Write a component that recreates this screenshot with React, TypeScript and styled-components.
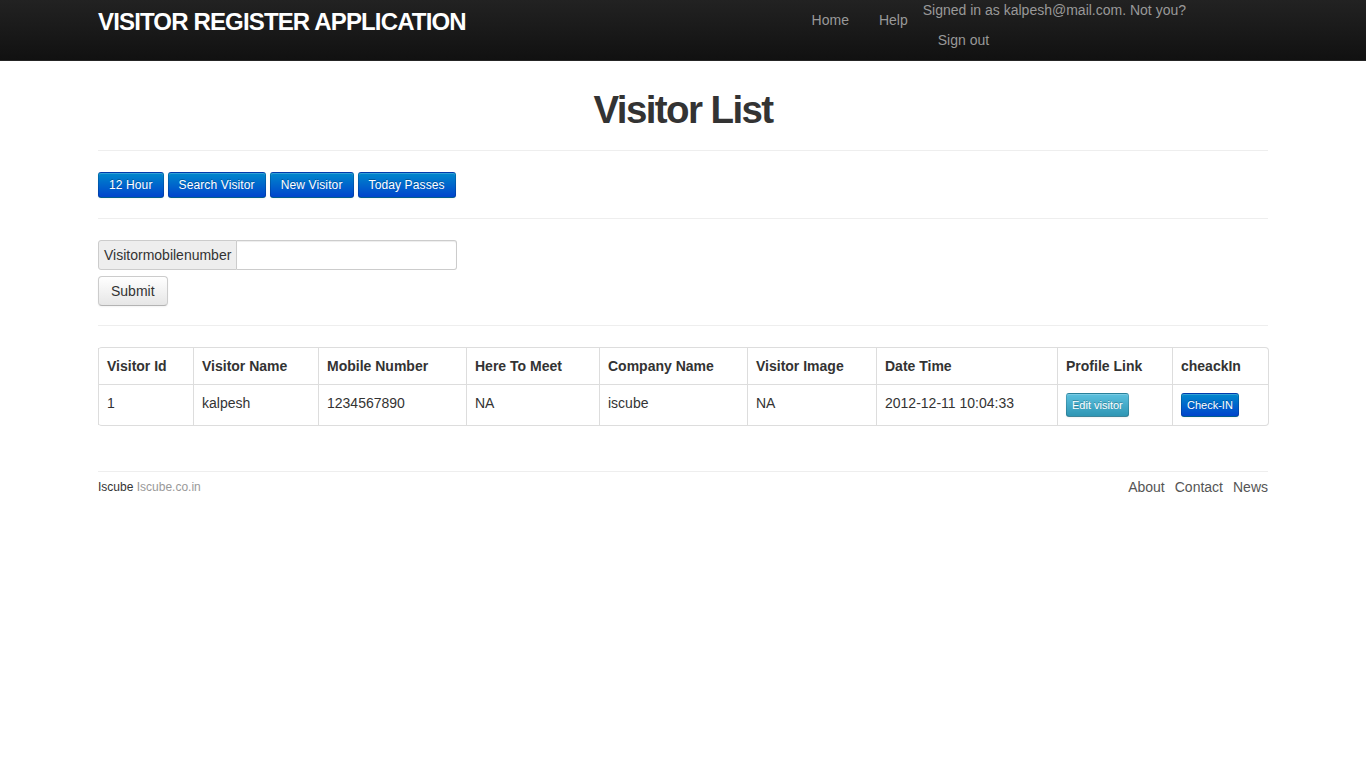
import React from "react";
import styled, { createGlobalStyle } from "styled-components";

const Global = createGlobalStyle`
  html, body { margin: 0; padding: 0; background: #fff; }
  body { font-family: "Liberation Sans", Arial, sans-serif; font-size: 14px; line-height: 20px; color: #333; }
  * { box-sizing: border-box; }
`;

const NavBar = styled.div`
  height: 61px;
  background: linear-gradient(to bottom, #222222, #111111);
  border-bottom: 1px solid #252525;
`;

const Container = styled.div`
  width: 1170px;
  margin: 0 auto;
`;

const NavInner = styled(Container)`
  display: flex;
  align-items: flex-start;
`;

const Brand = styled.a`
  display: block;
  color: #fff;
  font-weight: bold;
  font-size: 24px;
  line-height: 30px;
  padding-top: 7px;
  letter-spacing: -0.85px;
  text-decoration: none;
`;

const NavList = styled.ul`
  list-style: none;
  margin: 0 82px 0 auto;
  padding: 0;
  display: flex;
  align-items: flex-start;
`;

const NavLink = styled.a`
  display: block;
  padding: 10px 15px;
  color: #999;
  text-decoration: none;
  line-height: 20px;
  font-size: 14px;
`;

const SignedIn = styled.li`
  color: #999;
  display: flex;
  flex-direction: column;
  align-items: flex-start;
`;

const SignedText = styled.span`
  display: block;
  line-height: 20px;
`;

const Title = styled.h1`
  margin: 29px 0 0;
  text-align: center;
  font-size: 38.5px;
  line-height: 40px;
  font-weight: bold;
  letter-spacing: -1.6px;
  color: #333;
`;

const Rule = styled.hr<{ $top: number; $bottom: number }>`
  margin: ${p => p.$top}px 0 ${p => p.$bottom}px;
  border: 0;
  border-top: 1px solid #eee;
  border-bottom: 1px solid #fff;
`;

const ButtonRow = styled.div`
  display: flex;
  gap: 4px;
`;

const Btn = styled.a<{ $variant?: "primary" | "info"; $small?: boolean }>`
  display: inline-block;
  text-decoration: none;
  font-size: ${p => (p.$small ? 11 : 12)}px;
  line-height: 16px;
  padding: ${p => (p.$small ? "3px 5px 3px" : "4px 10px 4px")};
  letter-spacing: ${p => (p.$small ? 0 : 0.12)}px;
  border-radius: 3px;
  color: #fff;
  text-shadow: 0 -1px 0 rgba(0,0,0,0.25);
  cursor: pointer;
  border: 1px solid rgba(0,0,0,0.15);
  border-bottom-color: rgba(0,0,0,0.3);
  background: ${p =>
    p.$variant === "info"
      ? "linear-gradient(to bottom, #5bc0de, #2f96b4)"
      : "linear-gradient(to bottom, #0088cc, #0044cc)"};
  box-shadow: inset 0 1px 0 rgba(255,255,255,0.2), 0 1px 2px rgba(0,0,0,0.05);
`;

const Prepend = styled.div`
  display: flex;
  margin-bottom: 6px;
`;

const AddOn = styled.span`
  display: block;
  height: 30px;
  padding: 4px 5px;
  font-size: 14px;
  line-height: 20px;
  background: #eee;
  border: 1px solid #ccc;
  border-radius: 3px 0 0 3px;
  color: #333;
`;

const Input = styled.input`
  width: 220px;
  height: 30px;
  border: 1px solid #ccc;
  border-left: 0;
  border-radius: 0 3px 3px 0;
  margin: 0;
  padding: 4px 6px;
  font-family: inherit;
  font-size: 14px;
  box-shadow: inset 0 1px 1px rgba(0,0,0,0.075);
`;

const SubmitBtn = styled.button`
  display: block;
  height: 30px;
  padding: 4px 12px;
  font-family: inherit;
  font-size: 14px;
  line-height: 20px;
  color: #333;
  border: 1px solid #ccc;
  border-bottom-color: #b3b3b3;
  border-radius: 4px;
  background: linear-gradient(to bottom, #ffffff, #e6e6e6);
  box-shadow: inset 0 1px 0 rgba(255,255,255,0.2), 0 1px 2px rgba(0,0,0,0.05);
`;

const Table = styled.table`
  width: 1170px;
  border-collapse: separate;
  border-spacing: 0;
  border: 1px solid #ddd;
  border-left: 0;
  border-radius: 4px;
  table-layout: fixed;
`;

const Th = styled.th`
  text-align: left;
  font-weight: bold;
  padding: 8px;
  line-height: 20px;
  height: 36px;
  border-left: 1px solid #ddd;
  color: #333;
`;

const Td = styled.td`
  padding: 8px;
  line-height: 20px;
  border-left: 1px solid #ddd;
  border-top: 1px solid #ddd;
  vertical-align: top;
  height: 41px;
`;

const Footer = styled.footer`
  margin-top: 45px;
  border-top: 1px solid #eee;
  padding-top: 5px;
  display: flex;
  justify-content: space-between;
  align-items: center;
`;

const FootLeft = styled.div`
  font-size: 12px;
  color: #333;
`;

const FootMuted = styled.span`
  color: #999;
`;

const FootLinks = styled.div`
  display: flex;
  gap: 10px;
  font-size: 14px;
  color: #555;
`;

const cols = [95, 125, 148, 133, 148, 129, 181, 115, 96];
const heads = ["Visitor Id", "Visitor Name", "Mobile Number", "Here To Meet", "Company Name", "Visitor Image", "Date Time", "Profile Link", "cheackIn"];

export default function App() {
  return (
    <>
      <Global />
      <NavBar>
        <NavInner>
          <Brand>VISITOR REGISTER APPLICATION</Brand>
          <NavList>
            <li><NavLink>Home</NavLink></li>
            <li><NavLink>Help</NavLink></li>
            <SignedIn>
              <SignedText>Signed in as kalpesh@mail.com. Not you?</SignedText>
              <NavLink>Sign out</NavLink>
            </SignedIn>
          </NavList>
        </NavInner>
      </NavBar>
      <Container>
        <Title>Visitor List</Title>
        <Rule $top={20} $bottom={20} />
        <ButtonRow>
          <Btn $variant="primary">12 Hour</Btn>
          <Btn $variant="primary">Search Visitor</Btn>
          <Btn $variant="primary">New Visitor</Btn>
          <Btn $variant="primary">Today Passes</Btn>
        </ButtonRow>
        <Rule $top={20} $bottom={20} />
        <Prepend>
          <AddOn>Visitormobilenumber</AddOn>
          <Input />
        </Prepend>
        <SubmitBtn>Submit</SubmitBtn>
        <Rule $top={19} $bottom={20} />
        <Table>
          <colgroup>
            {cols.map((w, i) => <col key={i} style={{ width: w }} />)}
          </colgroup>
          <thead>
            <tr>{heads.map(h => <Th key={h}>{h}</Th>)}</tr>
          </thead>
          <tbody>
            <tr>
              <Td>1</Td>
              <Td>kalpesh</Td>
              <Td>1234567890</Td>
              <Td>NA</Td>
              <Td>iscube</Td>
              <Td>NA</Td>
              <Td>2012-12-11 10:04:33</Td>
              <Td><Btn $variant="info" $small>Edit visitor</Btn></Td>
              <Td><Btn $variant="primary" $small>Check-IN</Btn></Td>
            </tr>
          </tbody>
        </Table>
        <Footer>
          <FootLeft>Iscube <FootMuted>Iscube.co.in</FootMuted></FootLeft>
          <FootLinks><span>About</span><span>Contact</span><span>News</span></FootLinks>
        </Footer>
      </Container>
    </>
  );
}
